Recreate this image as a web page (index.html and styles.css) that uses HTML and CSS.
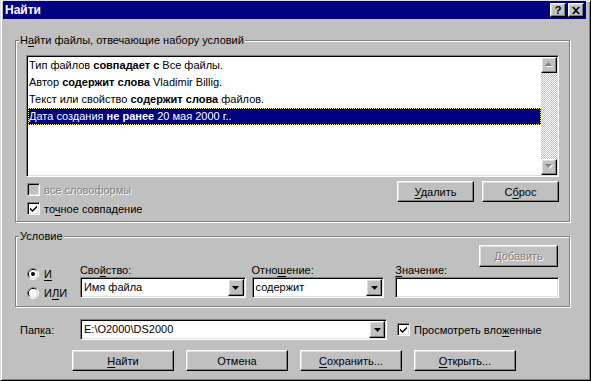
FILE: index.html
```html
<!DOCTYPE html>
<html lang="ru">
<head>
<meta charset="utf-8">
<title>Найти</title>
<link rel="stylesheet" href="styles.css">
</head>
<body>
<div class="window">
  <div class="titlebar">
    <span class="title">Найти</span>
    <div class="caption-btns">
      <button class="cap help">?</button>
      <button class="cap close"><svg width="8" height="7" viewBox="0 0 8 7"><path d="M0 0h2l2 2.2L6 0h2L5 3.5 8 7H6L4 4.8 2 7H0l3-3.5z" fill="#000"/></svg></button>
    </div>
  </div>
  <div class="content">
    <div class="group g1">
      <div class="legend">Н<u>а</u>йти файлы, отвечающие набору условий</div>
      <div class="listbox">
        <div class="rows">
          <div class="row">Тип файлов <b>совпадает с</b> Все файлы.</div>
          <div class="row">Автор <b>содержит слова</b> Vladimir Billig.</div>
          <div class="row">Текст или свойство <b>содержит слова</b> файлов.</div>
          <div class="row sel">Дата создания <b>не ранее</b> 20 мая 2000 г..</div>
        </div>
        <div class="vscroll">
          <div class="sbtn"><svg width="9" height="6" viewBox="0 0 9 6"><path d="M4.5 1L8 5H1z" fill="#fff"/><path d="M3.5 0L7 4H0z" fill="#808080"/></svg></div>
          <div class="track"></div>
          <div class="sbtn"><svg width="9" height="6" viewBox="0 0 9 6"><path d="M1 1h7L4.5 5z" fill="#fff"/><path d="M0 0h7L3.5 4z" fill="#808080"/></svg></div>
        </div>
      </div>
      <div class="under">
        <div class="checks">
          <label class="check disabled"><span class="box off"></span><span>все словоформы</span></label>
          <label class="check"><span class="box"><svg width="9" height="9" viewBox="0 0 9 9"><path d="M1 3.5v2l2.5 2.5L8 3.5v-2L3.5 6z" fill="#000"/></svg></span><span>то<u>ч</u>ное совпадение</span></label>
        </div>
        <div class="btns">
          <button class="btn small"><span><u>У</u>далить</span></button>
          <button class="btn small"><span>С<u>б</u>рос</span></button>
        </div>
      </div>
    </div>

    <div class="group g2">
      <div class="legend">Условие</div>
      <div class="cond">
        <div class="radios">
          <label class="radio"><svg width="12" height="12" viewBox="0 0 12 12"><path d="M2.11 9.89A5.5 5.5 0 0 1 9.89 2.11" stroke="#808080" fill="none"/><path d="M9.89 2.11A5.5 5.5 0 0 1 2.11 9.89" stroke="#fff" fill="none"/><path d="M2.82 9.18A4.5 4.5 0 0 1 9.18 2.82" stroke="#000" fill="none"/><path d="M9.18 2.82A4.5 4.5 0 0 1 2.82 9.18" stroke="#dfdfdf" fill="none"/><circle cx="6" cy="6" r="4" fill="#fff"/><circle cx="6" cy="6" r="2" fill="#000"/></svg><span><u>И</u></span></label>
          <label class="radio"><svg width="12" height="12" viewBox="0 0 12 12"><path d="M2.11 9.89A5.5 5.5 0 0 1 9.89 2.11" stroke="#808080" fill="none"/><path d="M9.89 2.11A5.5 5.5 0 0 1 2.11 9.89" stroke="#fff" fill="none"/><path d="M2.82 9.18A4.5 4.5 0 0 1 9.18 2.82" stroke="#000" fill="none"/><path d="M9.18 2.82A4.5 4.5 0 0 1 2.82 9.18" stroke="#dfdfdf" fill="none"/><circle cx="6" cy="6" r="4" fill="#fff"/></svg><span>И<u>Л</u>И</span></label>
        </div>
        <div class="field prop">
          <label>Сво<u>й</u>ство:</label>
          <div class="combo"><span class="ctext">Имя файла</span><span class="drop"><svg width="7" height="4" viewBox="0 0 7 4"><path d="M0 0h7L3.5 4z" fill="#000"/></svg></span></div>
        </div>
        <div class="field rel">
          <label>Отно<u>ш</u>ение:</label>
          <div class="combo"><span class="ctext">содержит</span><span class="drop"><svg width="7" height="4" viewBox="0 0 7 4"><path d="M0 0h7L3.5 4z" fill="#000"/></svg></span></div>
        </div>
        <div class="field val">
          <button class="btn add">Добавить</button>
          <label><u>З</u>начение:</label>
          <div class="combo"></div>
        </div>
      </div>
    </div>

    <div class="folder">
      <span class="folder-label">Пап<u>к</u>а:</span>
      <div class="combo path"><span class="ctext">E:\O2000\DS2000</span><span class="drop"><svg width="7" height="4" viewBox="0 0 7 4"><path d="M0 0h7L3.5 4z" fill="#000"/></svg></span></div>
      <label class="check sub"><span class="box"><svg width="9" height="9" viewBox="0 0 9 9"><path d="M1 3.5v2l2.5 2.5L8 3.5v-2L3.5 6z" fill="#000"/></svg></span><span>Просмотреть вло<u>ж</u>енные</span></label>
    </div>

    <div class="actions">
      <button class="btn wide"><span><u>Н</u>айти</span></button>
      <button class="btn wide"><span>Отмена</span></button>
      <button class="btn wide"><span><u>С</u>охранить...</span></button>
      <button class="btn wide"><span><u>О</u>ткрыть...</span></button>
    </div>
  </div>
</div>
</body>
</html>
```

FILE: styles.css
```css
* { box-sizing: border-box; }
html, body { margin: 0; padding: 0; }
body {
  font-family: "Liberation Sans", Arial, sans-serif;
  font-size: 11px;
  color: #000;
  background: #c0c0c0;
}
u { text-decoration: underline; text-underline-offset: 2px; }

.window {
  width: 591px;
  height: 381px;
  background: #c0c0c0;
  border: 1px solid;
  border-color: #dfdfdf #000 #000 #dfdfdf;
  box-shadow: inset 1px 1px #fff, inset -1px -1px #808080;
  padding: 0 4px 0 2px;
  overflow: hidden;
}

.titlebar {
  height: 18px;
  background: #000080;
  display: flex;
  align-items: center;
  justify-content: space-between;
  padding: 0 2px;
}
.title { color: #fff; font-weight: bold; font-size: 12px; }
.caption-btns { display: flex; gap: 2px; }

button { font: inherit; color: #000; margin: 0; padding: 0; }

.cap, .btn, .sbtn, .drop {
  background: #c0c0c0;
  border: 1px solid;
  border-color: #fff #000 #000 #fff;
  box-shadow: inset -1px -1px #808080, inset 1px 1px #dfdfdf;
  display: flex;
  align-items: center;
  justify-content: center;
}
.cap { width: 16px; height: 14px; font-weight: bold; font-size: 11px; line-height: 12px; }

.content { padding-left: 12px; }

.group {
  width: 555px;
  border: 1px solid #808080;
  box-shadow: inset 1px 1px #fff, 1px 1px #fff;
  padding: 0 10px;
}
.legend {
  margin: -8px 0 0 -7px;
  padding: 0 1px;
  background: #c0c0c0;
  line-height: 15px;
  width: max-content;
}
.g1 { margin-top: 21px; padding-bottom: 3px; }
.g2 { margin-top: 14px; padding-bottom: 8px; }

.listbox, .box, .combo {
  border: 1px solid;
  border-color: #808080 #fff #fff #808080;
  box-shadow: inset 1px 1px #000, inset -1px -1px #dfdfdf;
  padding: 1px;
  background: #fff;
}

.listbox {
  margin-top: 7px;
  width: 533px;
  height: 122px;
  display: flex;
}
.rows { flex: 1; }
.row { height: 17px; line-height: 17px; padding-left: 1px; white-space: nowrap; }
.row.sel {
  background: #000080;
  color: #fff;
  outline: 1px dotted #ffffb0;
  outline-offset: -1px;
}
.vscroll { width: 16px; display: flex; flex-direction: column; }
.sbtn { width: 16px; height: 16px; }
.track {
  flex: 1;
  background: repeating-conic-gradient(#c0c0c0 0 25%, #fff 0 50%) 0 0 / 2px 2px;
}

.under { display: flex; justify-content: space-between; margin-top: 4px; }
.checks { margin: -1px 0 0 1px; }
.check { display: flex; align-items: center; gap: 4px; height: 19px; white-space: nowrap; }
.box { width: 13px; height: 13px; display: flex; align-items: center; justify-content: center; }
.box.off { background: #c0c0c0; }
.disabled { color: #808080; text-shadow: 1px 1px #fff; }

.btns { display: flex; gap: 8px; }
.btn { height: 21px; }
.btn.small { width: 77px; }
.btn.wide { width: 102px; }

.cond { display: flex; align-items: flex-end; margin-top: 1px; }
.radios { width: 53px; margin: 0 0 -4px 1px; }
.radio { height: 19px; display: flex; align-items: center; gap: 5px; }
.field label { display: block; line-height: 14px; white-space: nowrap; }
.field.prop { width: 166px; }
.field.rel { width: 133px; margin-left: 6px; }
.field.val { width: 164px; margin-left: 11px; display: flex; flex-direction: column; }
.btn.add {
  align-self: flex-end;
  width: 79px;
  height: 22px;
  margin: 0 1px -4px 0;
  color: #808080;
  text-shadow: 1px 1px #fff;
}

.combo { height: 21px; display: flex; align-items: center; }
.ctext { flex: 1; padding-left: 2px; white-space: nowrap; line-height: 17px; }
.drop { width: 16px; height: 17px; }

.folder { display: flex; align-items: center; margin-top: 12px; }
.folder-label { width: 65px; padding-left: 5px; }
.combo.path { width: 307px; }
.check.sub { margin-left: 10px; }

.actions { display: flex; gap: 12px; margin: 10px 0 0 57px; }
```
